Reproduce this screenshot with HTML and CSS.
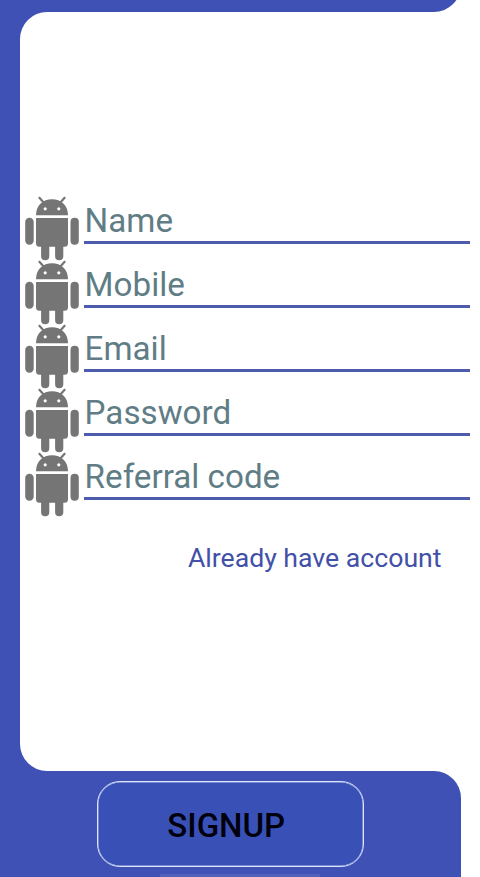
FILE: index.html
```html
<!DOCTYPE html>
<html lang="en">
<head>
<meta charset="utf-8">
<title>Signup</title>
<link rel="stylesheet" href="styles.css">
</head>
<body>
<svg class="symbols" aria-hidden="true">
  <symbol id="robot" viewBox="0 0 54 66">
    <path d="M11 19.2C11 9.3 18 3.2 27 3.2S43 9.3 43 19.2Z"/>
    <path class="antenna" d="M14.4 1.8L18.4 6.2M39.6 1.8L35.6 6.2"/>
    <path d="M11 22H43V47.2Q43 50.7 39.5 50.7H38.3V60.2A4.1 4.1 0 0 1 30.1 60.2V50.7H24.3V60.2A4.1 4.1 0 0 1 16.1 60.2V50.7H14.5Q11 50.7 11 47.2Z"/>
    <rect x=".2" y="21.8" width="8.5" height="27" rx="4.2"/>
    <rect x="45.5" y="21.8" width="8.3" height="27" rx="4.1"/>
    <circle class="eye" cx="20.2" cy="12.8" r="1.6"/>
    <circle class="eye" cx="33.8" cy="12.8" r="1.6"/>
  </symbol>
</svg>
<div class="screen">
  <div class="top"></div>
  <main class="card">
    <div class="field"><svg class="icon"><use href="#robot"/></svg><div class="input">Name</div></div>
    <div class="field"><svg class="icon"><use href="#robot"/></svg><div class="input">Mobile</div></div>
    <div class="field"><svg class="icon"><use href="#robot"/></svg><div class="input">Email</div></div>
    <div class="field"><svg class="icon"><use href="#robot"/></svg><div class="input">Password</div></div>
    <div class="field"><svg class="icon"><use href="#robot"/></svg><div class="input">Referral code</div></div>
    <div class="login"><a>Already have account</a></div>
  </main>
  <footer class="bottom">
    <button class="signup">SIGNUP</button>
    <div class="handle"></div>
  </footer>
</div>
</body>
</html>
```
FILE: styles.css
```css
* { box-sizing: border-box; }
body { margin: 0; background: #fff; font-family: Roboto, sans-serif; overflow: hidden; }
.symbols { display: block; width: 0; height: 0; }
.screen {
  display: flow-root;
  width: 480px;
  height: 877px;
  overflow: hidden;
  background: linear-gradient(to right, #3f51b5 60px, #fff 60px);
}
.top {
  width: 461px;
  height: 51.5px;
  margin-top: -40px;
  background: #3f51b5;
  border-bottom-right-radius: 27px;
}
.card {
  height: 759px;
  margin-left: 20px;
  padding-top: 184.4px;
  background: #fff;
  border-radius: 27px 0 0 27px;
}
.field { display: flex; height: 64.1px; padding-left: 5px; }
.icon { flex: none; width: 54px; height: 66px; overflow: visible; fill: #757575; }
.antenna { fill: none; stroke: #757575; stroke-width: 2.2; stroke-linecap: round; }
.eye { fill: #fff; }
.input {
  width: 386px;
  height: 48px;
  margin-left: 5px;
  padding-left: .6px;
  border-bottom: 3px solid #4e5cae;
  color: #607d86;
  font-size: 33.2px;
  line-height: 50px;
  white-space: nowrap;
}
.login {
  margin: 26px 38.5px 0 0;
  text-align: right;
  color: #4250a8;
  font-size: 26.65px;
  line-height: 32px;
}
.bottom {
  width: 461px;
  height: 107px;
  padding: 10.5px 0 0 96.5px;
  background: #3f51b5;
  border-top-right-radius: 27px;
}
.signup {
  display: block;
  width: 267.5px;
  height: 86px;
  padding: 3px 8px 0 0;
  border: 1px solid #dce5fb;
  border-radius: 23px;
  background: #3951b6;
  box-shadow: inset 0 0 0 .5px #b4c3ee;
  color: #00000d;
  font: 500 33px/40px Roboto, sans-serif;
}
.handle { width: 160px; height: 6px; margin: 7px 0 0 63.5px; background: #5061bb; }
```
